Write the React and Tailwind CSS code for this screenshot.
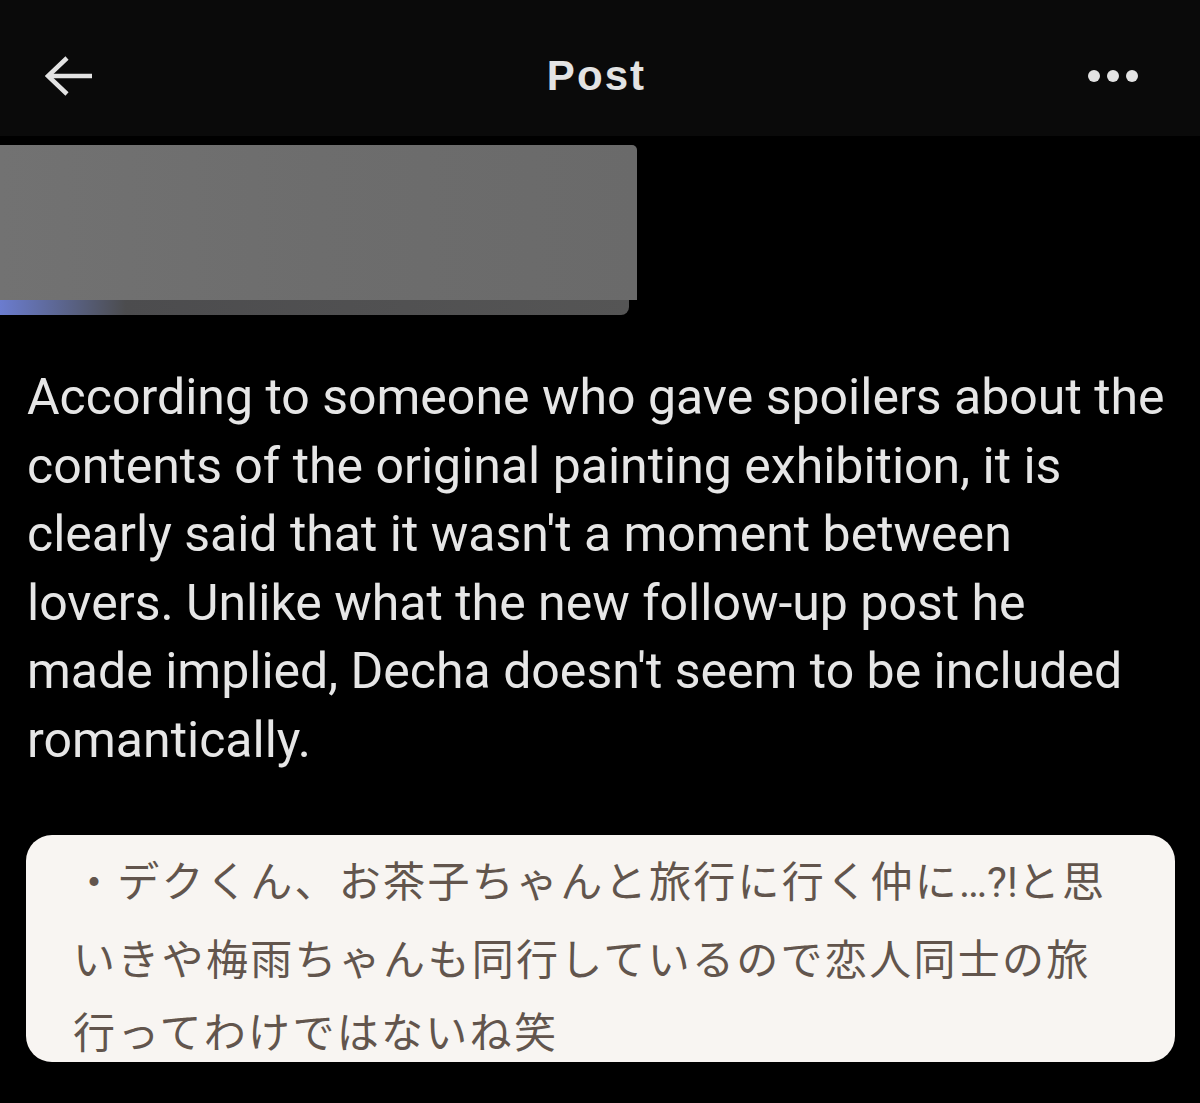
import React from "react";

const enLines = [
  "According to someone who gave spoilers about the",
  "contents of the original painting exhibition, it is",
  "clearly said that it wasn't a moment between",
  "lovers. Unlike what the new follow-up post he",
  "made implied, Decha doesn't seem to be included",
  "romantically.",
];

export default function App() {
  return (
    <div className="w-[1200px] h-[1103px] bg-black overflow-hidden relative">
      {/* Header */}
      <div className="h-[136px] bg-[#0a0a0a] grid grid-cols-[1fr_auto_1fr] items-center pl-[45px] pr-[62px] pt-[16px]">
        <div className="flex">
          <svg width="48" height="40" viewBox="0 0 48 40" fill="none">
            <path d="M47 20H4" stroke="#e3e3e3" strokeWidth="4.5" />
            <path d="M22 2L3 20L22 38" stroke="#e3e3e3" strokeWidth="4.5" strokeLinejoin="miter" />
          </svg>
        </div>
        <div
          className="text-[42px] font-bold text-[#e3e3e3] tracking-[0.05em] leading-none pl-[10px]"
          style={{ fontFamily: '"Liberation Sans", Arial, sans-serif' }}
        >
          Post
        </div>
        <div className="flex items-center justify-end gap-[7px]">
          <span className="w-[12px] h-[12px] rounded-full bg-[#e3e3e3]" />
          <span className="w-[12px] h-[12px] rounded-full bg-[#e3e3e3]" />
          <span className="w-[12px] h-[12px] rounded-full bg-[#e3e3e3]" />
        </div>
      </div>

      {/* Gray image block */}
      <div className="mt-[9px] w-[637px] h-[170px] flex flex-col">
        <div className="h-[155px] rounded-tr-[5px] bg-gradient-to-r from-[#727272] via-[#6d6d6d] to-[#6a6a6a]" />
        <div className="h-[15px] mr-[8px] rounded-br-[8px] bg-gradient-to-r from-[#6b7ccf] via-[#4c4c4e] via-20% to-[#555555]" />
      </div>

      {/* English text */}
      <div
        className="mt-[48px] pl-[27px] text-[#e6e6e6] text-[50px] leading-[68.5px]"
        style={{ fontFamily: 'Roboto, "Noto Sans", sans-serif' }}
      >
        {enLines.map((l, i) => (
          <div key={i} className="whitespace-nowrap">
            {l}
          </div>
        ))}
      </div>

      {/* Japanese quote box */}
      <div className="absolute left-[26px] top-[835px] w-[1149px] h-[227px] rounded-[26px] bg-[#f8f5f2] pl-[47px] pt-[7px]">
        <div
          className="text-[#62554d] text-[42px] leading-[73.5px] tracking-[2.3px]"
          style={{ fontFamily: '"Noto Sans CJK JP", "Noto Sans", sans-serif' }}
        >
          <div className="whitespace-nowrap">
            ・デクくん、お茶子ちゃんと旅行に行く仲に
            <span className="tracking-[0px]" style={{ fontFamily: 'Roboto, sans-serif' }}>…?!</span>
            と思
          </div>
          <div className="whitespace-nowrap">いきや梅雨ちゃんも同行しているので恋人同士の旅</div>
          <div className="whitespace-nowrap">行ってわけではないね笑</div>
        </div>
      </div>
    </div>
  );
}
